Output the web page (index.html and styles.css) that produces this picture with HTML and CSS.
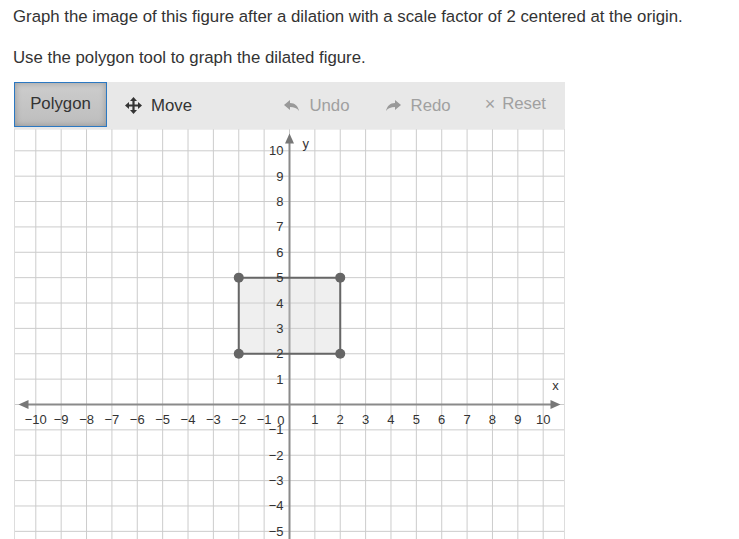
FILE: index.html
```html
<!DOCTYPE html>
<html lang="en">
<head>
    <meta charset="UTF-8">
    <meta name="viewport" content="width=device-width, initial-scale=1.0">
    <title>Dilation</title>
    <link rel="stylesheet" href="styles.css">
</head>
<body>
    <p class="prompt">Graph the image of this figure after a dilation with a scale factor of 2 centered at the origin.</p>
    <p class="prompt second">Use the polygon tool to graph the dilated figure.</p>

    <div class="grapher">
        <!-- Tool bar -->
        <div class="toolbar">
            <button class="tool active">Polygon</button>
            <button class="tool">
                <svg class="icon" width="17" height="17" viewBox="0 0 17 17">
                    <path d="M8.5 0 L12 4 L9.6 4 L9.6 7.4 L13 7.4 L13 5 L17 8.5 L13 12 L13 9.6 L9.6 9.6 L9.6 13 L12 13 L8.5 17 L5 13 L7.4 13 L7.4 9.6 L4 9.6 L4 12 L0 8.5 L4 5 L4 7.4 L7.4 7.4 L7.4 4 L5 4 Z" fill="#333"/>
                </svg>
                Move
            </button>
            <div class="spacer"></div>
            <button class="tool muted">
                <svg class="icon" width="15" height="12" viewBox="0 0 15 12">
                    <path d="M0 5 L6 0 L6 3 C11 3 14 6 15 11 C13 8 10 7 6 7 L6 10 Z" fill="#999"/>
                </svg>
                Undo
            </button>
            <button class="tool muted">
                <svg class="icon" width="15" height="12" viewBox="0 0 15 12">
                    <path d="M15 5 L9 0 L9 3 C4 3 1 6 0 11 C2 8 5 7 9 7 L9 10 Z" fill="#999"/>
                </svg>
                Redo
            </button>
            <button class="tool muted reset"><span class="times">&times;</span>Reset</button>
        </div>

        <!-- Coordinate plane -->
        <svg id="plane" width="551" height="551" viewBox="0 0 551 551"></svg>
    </div>

    <script>
        const NS = "http://www.w3.org/2000/svg";
        const plane = document.getElementById("plane");
        const c = 275.5;
        const u = 25.37;

        function add(tag, attrs, text) {
            const el = document.createElementNS(NS, tag);
            for (const k in attrs) el.setAttribute(k, attrs[k]);
            if (text !== undefined) el.textContent = text;
            plane.appendChild(el);
            return el;
        }

        // grid lines
        for (let k = -10; k <= 10; k++) {
            const p = c + k * u;
            add("line", { x1: p, y1: 0, x2: p, y2: 551, class: "grid" });
            add("line", { x1: 0, y1: p, x2: 551, y2: p, class: "grid" });
        }
        add("rect", { x: 0.5, y: 0, width: 550, height: 551, class: "frame" });

        // axes with arrow heads
        add("line", { x1: c - 262, y1: c, x2: c + 262, y2: c, class: "axis" });
        add("line", { x1: c, y1: c - 262, x2: c, y2: 551, class: "axis" });
        add("path", { d: `M${c - 271} ${c} l10 -4.5 l0 9 Z`, class: "arrow" });
        add("path", { d: `M${c + 271} ${c} l-10 -4.5 l0 9 Z`, class: "arrow" });
        add("path", { d: `M${c} ${c - 271} l-4.5 10 l9 0 Z`, class: "arrow" });
        add("text", { x: c + 13, y: 19, class: "label" }, "y");
        add("text", { x: c + 266, y: c - 15, class: "label mid" }, "x");

        // tick labels
        for (let k = -10; k <= 10; k++) {
            if (k === 0) continue;
            const name = k < 0 ? "\u2212" + (-k) : String(k);
            add("text", { x: c + k * u, y: c + 19.5, class: "label mid" }, name);
            add("text", { x: c - 6, y: c - k * u + 4.5, class: "label end" }, name);
        }
        add("text", { x: c - 5, y: c + 20.5, class: "label end" }, "0");

        // the figure
        const pts = [[-2, 5], [2, 5], [2, 2], [-2, 2]];
        const xy = pts.map(p => [c + p[0] * u, c - p[1] * u]);
        add("polygon", { points: xy.map(p => p.join(",")).join(" "), class: "figure" });
        xy.forEach(p => add("circle", { cx: p[0], cy: p[1], r: 5, class: "vertex" }));

        // labels drawn over the figure
        plane.querySelectorAll("text").forEach(t => plane.appendChild(t));
    </script>
</body>
</html>
```

FILE: styles.css
```css
/* Page */
body {
    margin: 0;
    padding: 7px 13px 0;
    font-family: "Liberation Sans", Arial, sans-serif;
    color: #333;
    background-color: #ffffff;
    overflow: hidden;
}

.prompt {
    margin: 0;
    font-size: 16.8px;
    line-height: 20px;
}

.prompt.second {
    margin-top: 21px;
}

/* Grapher */
.grapher {
    width: 551px;
    margin: 14px 0 0 1px;
}

.toolbar {
    display: flex;
    align-items: flex-start;
    height: 47px;
    background-color: #e8e8e8;
}

.tool {
    display: flex;
    align-items: center;
    gap: 9px;
    height: 45px;
    padding: 2px 18px 0;
    border: 0;
    background: none;
    font-family: "Liberation Sans", Arial, sans-serif;
    font-size: 16.8px;
    color: #333;
    cursor: pointer;
}

.tool.active {
    width: 93px;
    justify-content: center;
    padding: 0 0 1px;
    border: 1px solid #2b78c2;
    background: linear-gradient(#cdcdcd, #bdbdbd);
    box-shadow: inset 0 0 6px rgba(0, 0, 0, 0.25);
}

.tool.muted {
    color: #a0a0a0;
    gap: 10px;
}

.tool.reset {
    gap: 7px;
    padding: 0 19px 1px 16px;
}

.times {
    font-size: 18px;
    line-height: 1;
}

.spacer {
    flex: 1;
}

/* Plane */
#plane {
    display: block;
}

.grid {
    stroke: #cccccc;
    stroke-width: 1;
}

.frame {
    fill: none;
    stroke: #dddddd;
    stroke-width: 1;
}

.axis {
    stroke: #8a8a8a;
    stroke-width: 2;
}

.arrow {
    fill: #777777;
}

.label {
    font-family: "Liberation Sans", Arial, sans-serif;
    font-size: 13px;
    fill: #333;
}

.label.mid {
    text-anchor: middle;
}

.label.end {
    text-anchor: end;
}

.figure {
    fill: rgba(210, 210, 210, 0.35);
    stroke: #666666;
    stroke-width: 2;
}

.vertex {
    fill: #666666;
}
```
